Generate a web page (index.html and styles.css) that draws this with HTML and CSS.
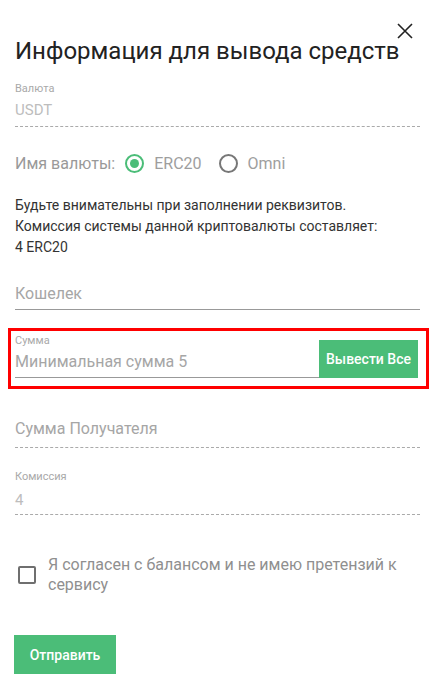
FILE: index.html
```html
<!DOCTYPE html>
<html lang="ru">
<head>
<meta charset="utf-8">
<title>Информация для вывода средств</title>
<link rel="stylesheet" href="styles.css">
</head>
<body>
<div class="modal">
  <button class="close" aria-label="Закрыть">
    <svg width="16" height="16" viewBox="0 0 16 16"><path d="M1 1L15 15M15 1L1 15" stroke="#222" stroke-width="1.6" fill="none"/></svg>
  </button>
  <h1 class="title">Информация для вывода средств</h1>

  <div class="field dotted f-currency">
    <div class="label">Валюта</div>
    <div class="value">USDT</div>
  </div>

  <div class="radio-row">
    <span class="radio-title">Имя валюты:</span>
    <span class="radio checked"></span>
    <span class="radio-text">ERC20</span>
    <span class="radio"></span>
    <span class="radio-text">Omni</span>
  </div>

  <p class="notice">Будьте внимательны при заполнении реквизитов.<br>Комиссия системы данной криптовалюты составляет:<br>4 ERC20</p>

  <div class="field solid f-wallet">
    <div class="placeholder">Кошелек</div>
  </div>

  <div class="sum-box">
    <div class="sum-field">
      <div class="label">Сумма</div>
      <div class="placeholder">Минимальная сумма 5</div>
    </div>
    <button class="btn btn-all">Вывести Все</button>
  </div>

  <div class="field dotted f-recipient">
    <div class="placeholder">Сумма Получателя</div>
  </div>

  <div class="field dotted f-fee">
    <div class="label">Комиссия</div>
    <div class="value">4</div>
  </div>

  <label class="agree">
    <span class="checkbox"></span>
    <span class="agree-text">Я согласен с балансом и не имею претензий к сервису</span>
  </label>

  <button class="btn btn-send">Отправить</button>
</div>
</body>
</html>
```

FILE: styles.css
```css
* { box-sizing: border-box; }
html, body { margin: 0; padding: 0; background: #fff; }
body { font-family: Roboto, "Noto Sans", sans-serif; }

.modal {
  position: relative;
  width: 435px;
  padding: 35px 15px 0 15px;
}

.close {
  position: absolute;
  top: 23px;
  left: 397px;
  width: 16px;
  height: 16px;
  padding: 0;
  border: 0;
  background: none;
  display: block;
}
.close svg { display: block; }

.title {
  margin: 0;
  font-size: 24px;
  font-weight: 400;
  line-height: 32px;
  color: #222;
  white-space: nowrap;
}

.field { display: flex; flex-direction: column; }
.dotted { border-bottom: 1px dashed #aaa; }
.solid { border-bottom: 1px solid #999; }

.label {
  font-size: 11px;
  line-height: 14px;
  color: #a9a9a9;
}
.value {
  font-size: 15px;
  line-height: 20px;
  color: #bdbdbd;
}
.placeholder {
  font-size: 16px;
  line-height: 20px;
  color: #a6a6a6;
}

.f-currency { margin-top: 15px; padding-bottom: 6px; }
.f-currency .value { margin-top: 4px; }

.radio-row {
  margin-top: 26px;
  height: 20px;
  display: flex;
  align-items: center;
  font-size: 16px;
  color: #999;
}
.radio-title { margin-right: 10px; }
.radio {
  width: 19px;
  height: 19px;
  border: 2px solid #777;
  border-radius: 50%;
  display: flex;
  align-items: center;
  justify-content: center;
  margin-right: 10px;
}
.radio.checked { border-color: #4bbd78; }
.radio.checked::after {
  content: "";
  width: 9px;
  height: 9px;
  border-radius: 50%;
  background: #4bbd78;
}
.radio-text { margin-right: 17px; color: #9e9e9e; }

.notice {
  margin: 22px 0 0 0;
  font-size: 14px;
  line-height: 21px;
  color: #333;
}

.f-wallet { margin-top: 26px; padding-bottom: 5px; }

.sum-box {
  margin: 18px -9px 0 -7px;
  border: 3px solid #f00;
  padding: 3px 8px 8px 4px;
  display: flex;
  align-items: flex-end;
}
.sum-field {
  flex: 1;
  border-bottom: 1px solid #999;
  padding-bottom: 5px;
  display: flex;
  flex-direction: column;
}
.sum-field .placeholder { margin-top: 4px; }

.btn {
  border: 0;
  background: #4bbd78;
  color: #fff;
  font-family: Roboto, "Noto Sans", sans-serif;
  font-weight: 500;
  font-size: 14px;
  padding: 0;
}
.btn-all { width: 99px; height: 38px; }

.f-recipient { margin-top: 30px; padding-bottom: 8px; }

.f-fee { margin-top: 22px; padding-bottom: 4px; }
.f-fee .value { margin-top: 6px; }

.agree {
  margin-top: 40px;
  display: flex;
  align-items: center;
  padding-left: 3px;
}
.checkbox {
  flex: none;
  width: 18px;
  height: 18px;
  border: 2px solid #6f6f6f;
  border-radius: 2px;
  margin-right: 12px;
}
.agree-text {
  font-size: 16px;
  line-height: 20px;
  color: #8f8f8f;
  padding-right: 20px;
}

.btn-send {
  display: block;
  margin-top: 40px;
  margin-left: -1px;
  width: 102px;
  height: 39px;
}
```
